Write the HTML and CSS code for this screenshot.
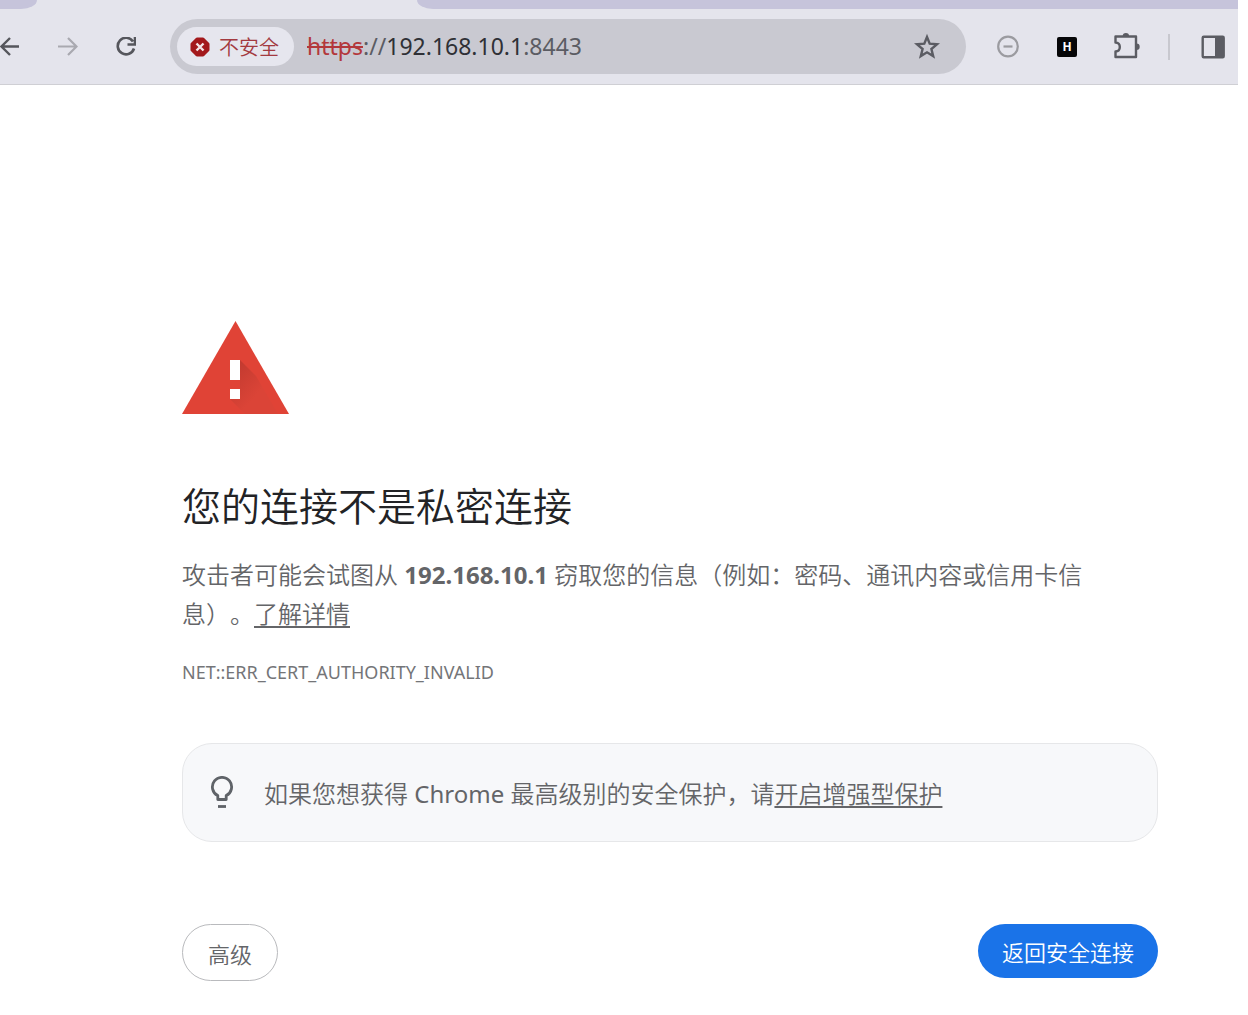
FILE: index.html
```
<!DOCTYPE html>
<html lang="zh-CN">
<head>
<meta charset="UTF-8">
<meta name="viewport" content="width=device-width, initial-scale=1">
<title>隐私设置错误</title>
<link rel="stylesheet" href="styles.css">
</head>
<body>

<header class="browser">
  <div class="tabs">
    <div class="tab tab-left"></div>
    <div class="tab-active"></div>
    <div class="tab tab-right"></div>
  </div>

  <div class="toolbar">
    <nav class="nav">
      <button type="button" class="nav-btn" aria-label="后退">
        <svg width="20" height="20" viewBox="0 0 20 20" fill="none" stroke="#55565c" stroke-width="2.400"><path d="M19 9.500H2M10 1 1.500 9.500 10 18"/></svg>
      </button>
      <button type="button" class="nav-btn" aria-label="前进">
        <svg width="20" height="20" viewBox="0 0 20 20" fill="none" stroke="#a9a9b0" stroke-width="2.200"><path d="M0 9.500h18M10 1l8.500 8.500L10 18"/></svg>
      </button>
      <button type="button" class="nav-btn" aria-label="重新加载">
        <svg width="20" height="20" viewBox="0 0 20 20" fill="none" stroke="#55565c" stroke-width="2.600"><path d="M17 4.500A8.300 8.300 0 1 0 18 11.500M19 0v7.500h-7.500"/></svg>
      </button>
    </nav>

    <div class="omnibox">
      <button type="button" class="chip">
        <svg width="20" height="20" viewBox="0 0 20 20"><path fill="#a3191c" stroke="#a3191c" stroke-width="3" stroke-linejoin="round" d="M7 2h6l5 5v6l-5 5H7l-5-5V7z"/><path d="M6.500 6.500l7 7m0-7l-7 7" stroke="#f3e6e8" stroke-width="2.400"/></svg>
        不安全
      </button>
      <div class="url" role="textbox" contenteditable="true" spellcheck="false" aria-label="地址栏"><span class="scheme">https</span><span class="port">://</span>192.168.10.1<span class="port">:8443</span></div>
      <button type="button" class="icon-btn" aria-label="收藏">
        <svg width="28" height="28" viewBox="0 0 28 28" fill="none" stroke="#5b5c63" stroke-width="2.400"><path d="M14 4l2.700 6.700 7.300.6-5.600 4.700 1.800 7.100-6.200-3.800-6.200 3.800 1.800-7.100L4 11.300l7.300-.6z"/></svg>
      </button>
    </div>

    <div class="extensions">
      <button type="button" class="icon-btn" aria-label="扩展 1">
        <svg width="28" height="28" viewBox="0 0 28 28" fill="none" stroke="#9b9ba0" stroke-width="2.200"><circle cx="14" cy="13.500" r="9.800"/><path d="M9.500 13.500h9"/></svg>
      </button>
      <button type="button" class="icon-btn" aria-label="扩展 2"><span class="ext-h">H</span></button>
      <button type="button" class="icon-btn" aria-label="扩展程序">
        <svg width="28" height="28" viewBox="0 0 28 28" fill="none" stroke="#5b5c63" stroke-width="2.400" stroke-linejoin="round"><path d="M3.500 3.500h20.500v20.500H3.500v-5.500c3 0 4.300-2 4.300-4.500s-1.300-4.500-4.300-4.500z"/><path d="M10.700 3.200a3.200 3.200 0 0 1 6.400 0zM24.500 10.500a3.200 3.200 0 0 1 0 6.400z" fill="#5b5c63" stroke="none"/></svg>
      </button>
    </div>
    <div class="divider"></div>
    <button type="button" class="icon-btn" aria-label="侧边栏">
      <svg width="28" height="28" viewBox="0 0 28 28"><rect x="4.700" y="3.700" width="21" height="20.500" rx="1" fill="none" stroke="#5b5c63" stroke-width="2.400"/><path d="M17 3.500h9v21h-9z" fill="#5b5c63"/></svg>
    </button>
  </div>
</header>

<main class="interstitial">
  <svg class="warning" width="107" height="94" viewBox="0 0 107 94">
    <defs>
      <linearGradient id="shade" x1="0" y1="0" x2="1" y2="1">
        <stop offset="0" stop-color="#bd382e"/>
        <stop offset="0.6" stop-color="#db4437"/>
      </linearGradient>
    </defs>
    <path fill="#e04336" d="M53.500 0L107 93H0z"/>
    <path fill="url(#shade)" d="M58 39l16 16 22 38H63L48 78l10-10z"/>
    <path fill="#fff" d="M48 39h10v20H48zM48 68h10v10H48z"/>
  </svg>

  <h1>您的连接不是私密连接</h1>
  <p class="message">攻击者可能会试图从 <strong>192.168.10.1</strong> 窃取您的信息（例如：密码、通讯内容或信用卡信息）。<a href="#">了解详情</a></p>
  <div class="error-code">NET::ERR_CERT_AUTHORITY_INVALID</div>

  <div class="promo">
    <svg class="bulb" width="24" height="34" viewBox="0 0 24 34" fill="none" stroke="#5f6368">
      <path d="M7.800 23.500v-3.900a9.600 9.600 0 1 1 8.400 0v3.900z" stroke-width="2.800" stroke-linejoin="round"/>
      <path d="M8 30.500h8" stroke-width="2.800"/>
    </svg>
    <p>如果您想获得 <span class="latin">Chrome</span> 最高级别的安全保护，请<a href="#">开启增强型保护</a></p>
  </div>

  <div class="actions">
    <button type="button" class="btn">高级</button>
    <button type="button" class="btn btn-primary">返回安全连接</button>
  </div>
</main>

</body>
</html>
```
FILE: styles.css
```
* {
  box-sizing: border-box;
}
body {
  margin: 0;
  padding-right: 10px;
  background: #fff;
  color: #646568;
  font-family: "Noto Sans", "Noto Sans CJK SC", sans-serif;
  font-size: 24px;
  font-weight: 350;
  text-spacing-trim: space-all;
}
h1, p {
  margin: 0;
}
a {
  color: inherit;
  text-underline-offset: 3px;
}
button {
  font-family: inherit;
  font-weight: inherit;
  cursor: pointer;
}
.url, .error-code, .latin {
  font-weight: normal;
}

/* browser bar */
.browser {
  background: #e4e4ec;
  border-bottom: 1px solid #cfcfd4;
}
.tabs {
  display: flex;
  height: 9px;
  overflow: hidden;
}
.tab {
  background: #c6c4db;
}
.tab-left {
  width: 37px;
  border-bottom-right-radius: 16px 9px;
}
.tab-active {
  width: 380px;
}
.tab-right {
  flex: 1;
  border-bottom-left-radius: 16px 9px;
}
.toolbar {
  display: flex;
  align-items: center;
  gap: 28px;
  height: 75px;
  padding-right: 12px;
}
.nav {
  display: flex;
  gap: 38px;
  padding-right: 6px;
}
.nav-btn, .icon-btn {
  display: flex;
  align-items: center;
  justify-content: center;
  flex: none;
  width: 28px;
  height: 28px;
  padding: 0;
  border: none;
  background: none;
}
.nav-btn {
  width: 20px;
}
.omnibox {
  display: flex;
  align-items: center;
  flex: 1;
  height: 55px;
  padding: 0 25px 0 7px;
  border-radius: 28px;
  background: #c9c9d1;
}
.chip {
  display: flex;
  align-items: center;
  gap: 9px;
  height: 39px;
  padding: 0 15px 0 13px;
  border: none;
  border-radius: 20px;
  background: #e6e6ee;
  color: #a33a40;
  font-size: 20px;
}
.url {
  flex: 1;
  padding-bottom: 2px;
  padding-left: 13px;
  color: #2f3036;
  font-size: 23px;
  outline: none;
}
.scheme {
  color: #b3383b;
  text-decoration: line-through;
}
.port {
  color: #5b5c63;
}
.extensions {
  display: flex;
  gap: 31px;
}
.ext-h {
  width: 20px;
  height: 20px;
  border-radius: 2px;
  background: #060608;
  color: #fff;
  font-size: 12px;
  font-weight: bold;
  line-height: 20px;
  text-align: center;
}
.divider {
  width: 2px;
  height: 26px;
  background: #c8c8cf;
}

/* warning page */
.interstitial {
  padding: 236px 80px 34px 182px;
}
.warning {
  display: block;
}
h1 {
  margin-top: 67px;
  color: #222326;
  font-size: 39px;
  font-weight: inherit;
  line-height: 48px;
}
.message {
  margin-top: 25px;
  padding-right: 24px;
  line-height: 39px;
}
.error-code {
  margin-top: 25px;
  color: #747578;
  font-size: 18px;
  line-height: 28px;
}
.promo {
  display: flex;
  align-items: center;
  gap: 30px;
  min-height: 99px;
  margin-top: 57px;
  padding: 24px 27px;
  border: 1px solid #e6e7e9;
  border-radius: 30px;
  background: #f7f8fa;
}
.bulb {
  flex: none;
}
.actions {
  display: flex;
  align-items: flex-start;
  justify-content: space-between;
  margin-top: 82px;
}
.btn {
  height: 57px;
  padding: 0 25px;
  border: 1px solid #b9babd;
  border-radius: 29px;
  background: #fff;
  color: #646568;
  font-size: 22px;
}
.btn-primary {
  height: 54px;
  padding: 0 24px;
  border: none;
  background: #1a73e8;
  color: #fff;
}
```
